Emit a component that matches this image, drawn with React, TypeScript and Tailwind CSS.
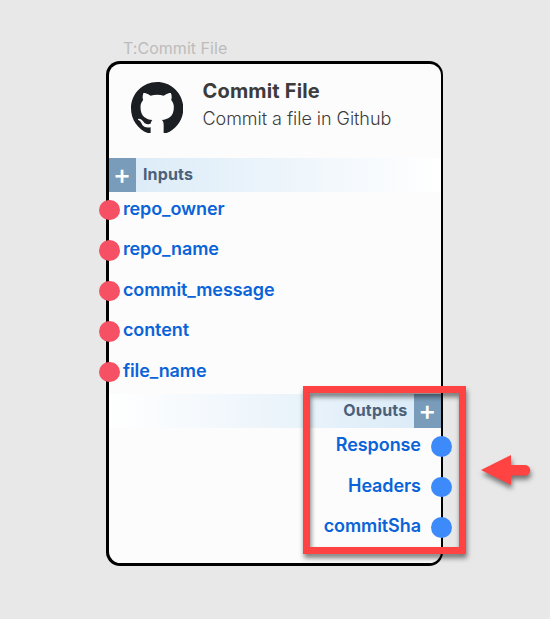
const inputs = ['repo_owner', 'repo_name', 'commit_message', 'content', 'file_name'];
const outputs = ['Response', 'Headers', 'commitSha'];

function GithubMark() {
  return (
    <svg viewBox="0 0 98 96" className="mt-[17.8px] h-[51.5px] w-[52.5px] shrink-0" fill="#1b1f23">
      <path
        fillRule="evenodd"
        clipRule="evenodd"
        d="M48.854 0C21.839 0 0 22 0 49.217c0 21.756 13.993 40.172 33.405 46.69 2.427.49 3.316-1.059 3.316-2.362 0-1.141-.08-5.052-.08-9.127-13.59 2.934-16.42-5.867-16.42-5.867-2.184-5.704-5.42-7.17-5.42-7.17-4.448-3.015.324-3.015.324-3.015 4.934.326 7.523 5.052 7.523 5.052 4.367 7.496 11.404 5.378 14.235 4.074.404-3.178 1.699-5.378 3.074-6.6-10.839-1.141-22.243-5.378-22.243-24.283 0-5.378 1.94-9.778 5.014-13.2-.485-1.222-2.184-6.275.486-13.038 0 0 4.125-1.304 13.426 5.052a46.97 46.97 0 0 1 12.214-1.63c4.125 0 8.33.571 12.213 1.63 9.302-6.356 13.427-5.052 13.427-5.052 2.67 6.763.97 11.816.485 13.038 3.155 3.422 5.015 7.822 5.015 13.2 0 18.905-11.404 23.06-22.324 24.283 1.78 1.548 3.316 4.481 3.316 9.126 0 6.6-.08 11.897-.08 13.526 0 1.304.89 2.853 3.316 2.364 19.412-6.52 33.405-24.935 33.405-46.691C97.707 22 75.788 0 48.854 0z"
      />
    </svg>
  );
}

function AddButton() {
  return (
    <button className="flex h-full w-[27px] shrink-0 justify-center bg-[#789cb9] text-[27px] font-medium leading-[34px] text-white">
      +
    </button>
  );
}

export default function App() {
  return (
    <div className="relative h-[619px] w-[550px] overflow-hidden bg-[#e8e8e8] pl-[106px] pt-[37px] font-['Inter',sans-serif]">
      <div className="h-[24.2px] pl-[17px] text-[16px] leading-[23px] tracking-[0.03px] text-[#bcbcbc]">T:Commit File</div>
      <div className="h-[504.6px] w-[337.4px] rounded-[14px] bg-black p-[2.6px]">
        <div className="h-full rounded-[11.4px] bg-[#fcfcfc]">
          <header className="flex h-[94.2px] pl-[22px]">
            <GithubMark />
            <div className="pl-[19.4px] pt-[14px] text-[#3c3c3c]">
              <h1 className="text-[20px] font-bold leading-[27px] tracking-[0.17px]">Commit File</h1>
              <p className="text-[18px] font-light leading-[28px] tracking-[-0.04px]">Commit a file in Github</p>
            </div>
          </header>
          <div className="flex h-[34px] bg-linear-to-r from-[#d9eaf7] to-white">
            <AddButton />
            <span className="pl-[7.4px] text-[16px] font-bold leading-[33px] tracking-[0.14px] text-[#4b6079]">Inputs</span>
          </div>
          <ul className="-ml-[9.6px] h-[202.4px]">
            {inputs.map((name) => (
              <li key={name} className="flex h-[40.5px] items-start">
                <span className="mt-[7.8px] h-[20.5px] w-[20.5px] shrink-0 rounded-full bg-[#f55064]" />
                <span className="pl-[3.4px] pt-[2.7px] text-[18px] font-semibold leading-[28px] tracking-[-0.09px] text-[#0a63d8]">
                  {name}
                </span>
              </li>
            ))}
          </ul>
          <div className="flex h-[34px] justify-end bg-linear-to-l from-[#d9eaf7] to-white">
            <span className="pr-[6.5px] text-[16px] font-bold leading-[33px] tracking-[0.16px] text-[#4b6079]">Outputs</span>
            <AddButton />
          </div>
          <ul className="-mr-[10.8px]">
            {outputs.map((name) => (
              <li key={name} className="flex h-[40.5px] items-start justify-end">
                <span className="pr-[10.2px] pt-[3.1px] text-[18px] font-semibold leading-[28px] tracking-[-0.09px] text-[#0a63d8]">
                  {name}
                </span>
                <span className="mt-[7.8px] h-[20.5px] w-[20.5px] shrink-0 rounded-full bg-[#3d8bfa]" />
              </li>
            ))}
          </ul>
        </div>
      </div>
      <svg
        viewBox="0 0 550 619"
        className="pointer-events-none absolute left-0 top-0 h-[619px] w-[550px] [filter:drop-shadow(1px_4px_2.5px_rgba(0,0,0,0.5))]"
      >
        <rect x="306.5" y="389.5" width="156" height="161" fill="none" stroke="#ff4343" strokeWidth="7" />
        <path d="M481 470 511 455V465H525a5 5 0 0 1 0 10.5H511V485Z" fill="#ff4343" />
      </svg>
    </div>
  );
}
